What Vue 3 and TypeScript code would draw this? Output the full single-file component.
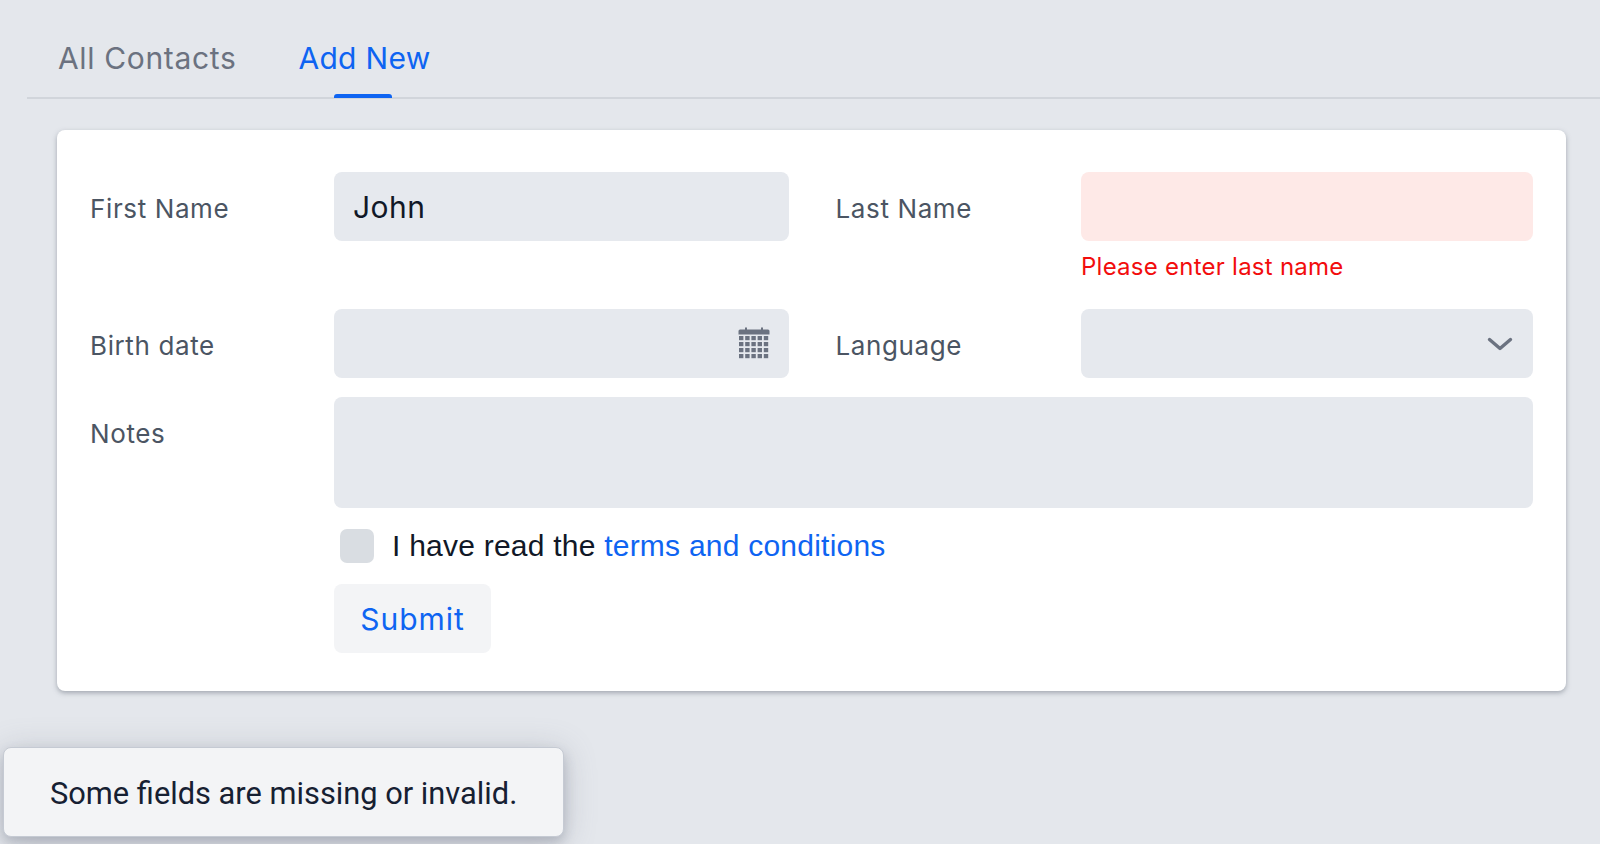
<script setup lang="ts">
const tabs: { label: string; active: boolean }[] = [
  { label: 'All Contacts', active: false },
  { label: 'Add New', active: true },
]
const cells = Array.from({ length: 20 }, (_, i) => ({ x: 1 + (i % 5) * 6.2, y: 8 + Math.floor(i / 5) * 6 }))
</script>

<template>
  <div class="page">
    <nav class="tabs">
      <a v-for="t in tabs" :key="t.label" class="tab" :class="{ active: t.active }">{{ t.label }}</a>
    </nav>
    <main class="card">
      <form class="form" @submit.prevent>
        <label class="label">First Name</label>
        <div class="field">John</div>
        <label class="label second">Last Name</label>
        <div class="stack">
          <div class="field error"></div>
          <div class="message">Please enter last name</div>
        </div>

        <label class="label">Birth date</label>
        <div class="field with-icon">
          <svg class="cal" width="32" height="32" viewBox="0 0 32 32">
            <path d="M2 2.6h5V1.2a1 1 0 0 1 2 0v1.4h14V1.2a1 1 0 0 1 2 0v1.4h5a1.5 1.5 0 0 1 1.5 1.5V7.4H.5V4.1A1.5 1.5 0 0 1 2 2.6z" fill="#6b7280" />
            <rect v-for="(c, i) in cells" :key="i" :x="c.x" :y="c.y + 1" width="4.4" height="4.2" fill="#6b7280" />
          </svg>
        </div>
        <label class="label second">Language</label>
        <div class="field with-icon select">
          <svg width="26" height="16" viewBox="0 0 26 16">
            <path d="M2.5 3.5l10.5 9L23.5 3.5" fill="none" stroke="#6b7280" stroke-width="3.4" stroke-linecap="round" stroke-linejoin="round" />
          </svg>
        </div>

        <label class="label">Notes</label>
        <div class="field notes"></div>

        <div class="terms">
          <span class="check"></span>
          <span>I have read the <a class="link">terms and conditions</a></span>
        </div>
        <div class="actions">
          <button class="submit" type="button">Submit</button>
        </div>
      </form>
    </main>
    <div class="toast">Some fields are missing or invalid.</div>
  </div>
</template>

<style>
html, body { margin: 0; background: #e4e7ec; }
</style>

<style scoped>
.page {
  position: relative;
  height: 844px;
  overflow: hidden;
  box-sizing: border-box;
  padding-left: 27px;
  background: #e4e7ec;
  font-family: Inter, "Liberation Sans", sans-serif;
  color: #111827;
}
.tabs {
  display: flex;
  height: 97px;
  padding-left: 31px;
  gap: 62px;
  border-bottom: 2px solid #d1d5db;
}
.tab {
  position: relative;
  display: block;
  padding-top: 39px;
  font-size: 30px;
  line-height: 38px;
  height: 58px;
  letter-spacing: 0.65px;
  color: #6b7280;
}
.tab.active { color: #0e64f2; letter-spacing: 0.3px; }
.tab.active::after {
  content: "";
  position: absolute;
  left: 36px;
  right: 38px;
  bottom: -1px;
  height: 4px;
  background: #0e64f2;
  border-radius: 3px 3px 0 0;
}
.card {
  margin: 31px 34px 0 30px;
  height: 561px;
  box-sizing: border-box;
  padding: 42px 32px 0 33px;
  background: #fff;
  border-radius: 8px;
  box-shadow: 0 2px 5px rgba(107, 114, 128, 0.55);
}
.form {
  display: grid;
  grid-template-columns: 244px 455px 292px 452px;
  grid-template-rows: 137px 88px 132px 55px 69px;
  align-content: start;
}
.label {
  font-size: 26px;
  line-height: 74px;
  color: #4b5563;
  letter-spacing: 0.62px;
  height: 69px;
}
.second { padding-left: 46.5px; }
.field {
  height: 69px;
  box-sizing: border-box;
  padding: 0 19px;
  background: #e6e9ee;
  border-radius: 8px;
  font-size: 30px;
  line-height: 70px;
  letter-spacing: 0.5px;
}
.error { background: #fee9e7; }
.message {
  margin-top: 11px;
  padding-left: 0;
  font-size: 24px;
  line-height: 30px;
  letter-spacing: 0.25px;
  color: #f20d0d;
}
.with-icon {
  display: flex;
  align-items: center;
  justify-content: flex-end;
}
.cal { margin-right: 0; transform: translateY(-1px); }
.select { padding-right: 20px; }
.notes { grid-column: 2 / 5; height: 111px; }
.terms {
  grid-column: 2 / 5;
  display: flex;
  align-items: center;
  padding-left: 6px;
  gap: 18px;
  height: 34px;
  font-family: "Liberation Sans", Arial, sans-serif;
  font-size: 30px;
  line-height: 34px;
  letter-spacing: 0.23px;
}
.check {
  width: 34px;
  height: 34px;
  background: #d9dde2;
  border-radius: 7px;
}
.link { color: #0e64f2; }
.actions { grid-column: 2 / 5; }
.submit {
  display: block;
  width: 157px;
  height: 69px;
  padding: 0;
  border: 0;
  background: #f3f4f6;
  border-radius: 8px;
  font: inherit;
  font-size: 30px;
  letter-spacing: 0.95px;
  color: #0e64f2;
}
.toast {
  position: absolute;
  left: 3px;
  top: 747px;
  width: 561px;
  height: 90px;
  box-sizing: border-box;
  padding-left: 46px;
  background: #f3f4f6;
  border-radius: 8px;
  border: 1px solid #c5cad3;
  font-family: Roboto, "Liberation Sans", sans-serif;
  font-size: 30.8px;
  line-height: 91px;
  color: #162032;
  box-shadow: 0 6px 12px rgba(107, 114, 128, 0.3), 0 4px 32px rgba(107, 114, 128, 0.3);
}
</style>
